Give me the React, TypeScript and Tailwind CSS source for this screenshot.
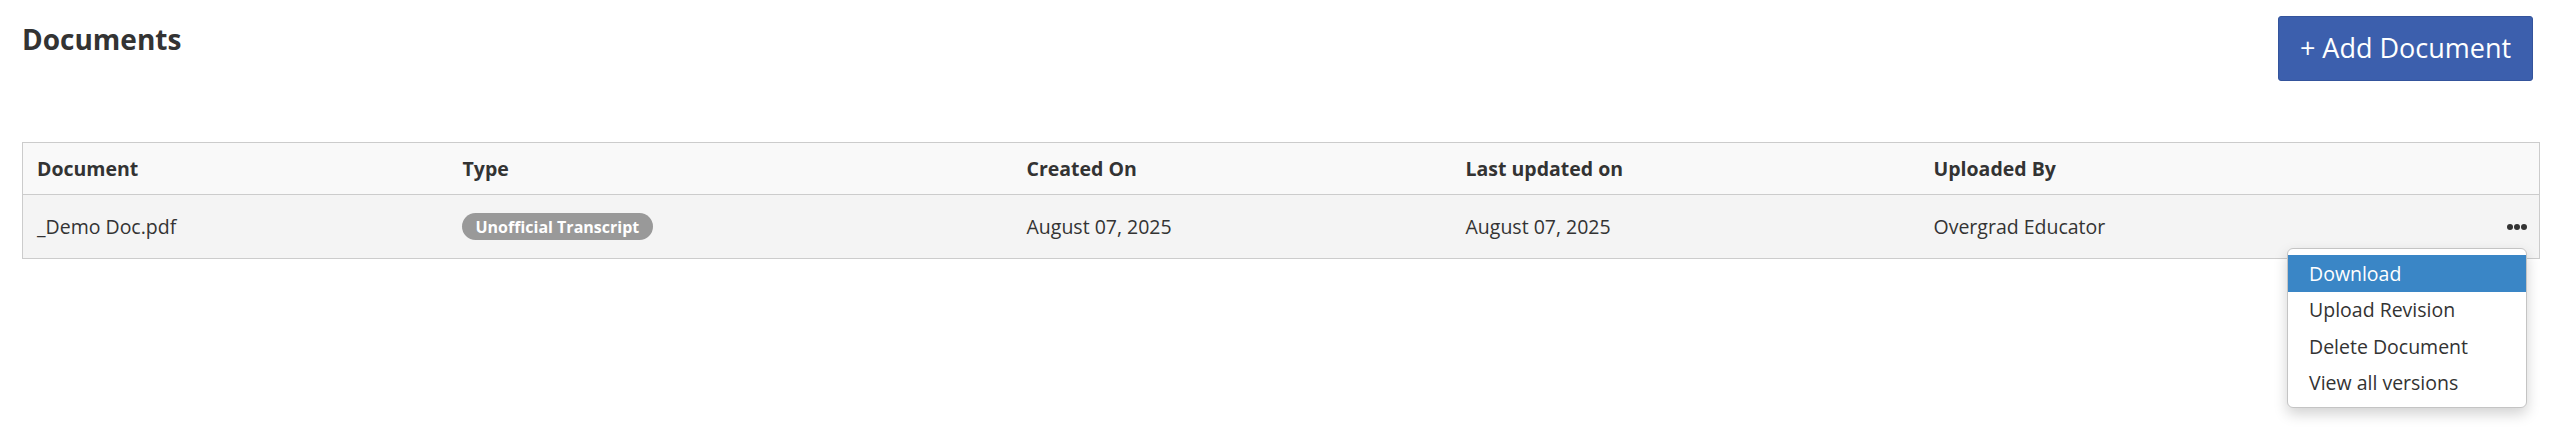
import React from "react"

const rows = [
    {
        name: '_Demo Doc.pdf',
        type: 'Unofficial Transcript',
        createdOn: 'August 07, 2025',
        updatedOn: 'August 07, 2025',
        uploadedBy: 'Overgrad Educator',
    },
]

const menuItems = ['Download', 'Upload Revision', 'Delete Document', 'View all versions']

const ActionsMenu = () => {
    return (
        <div className="absolute right-[12px] top-[53px] z-10 w-[240px] rounded-[6px] border border-[#c4c4c4] bg-white py-[6px] shadow-[0_6px_14px_rgba(0,0,0,0.18)]">
            {menuItems.map((item, i) => (
                <div
                    key={item}
                    className={
                        i === 0
                            ? "flex h-[36.5px] items-center bg-[#3a86c6] px-[21px] text-[19.5px] text-white"
                            : "flex h-[36.5px] items-center px-[21px] text-[19.5px] text-[#333333]"
                    }
                >
                    {item}
                </div>
            ))}
        </div>
    )
}

const App = () => {
    return (
        <div className="min-h-[430px] bg-white pl-[22px] pr-[18px] text-[#333333]" style={{ fontFamily: '"Open Sans", "Liberation Sans", sans-serif' }}>
            <div className="flex items-start justify-between">
                <h1 className="mt-[20px] text-[28px] font-bold leading-[38px] text-[#333333]">Documents</h1>
                <button
                    type="button"
                    className="mr-[7px] mt-[16px] flex h-[65px] w-[255px] items-center justify-center rounded-[3px] border border-[#34549c] bg-[#3c5fad] text-[27px] text-white"
                >
                    + Add Document
                </button>
            </div>

            <table className="mt-[61px] w-full table-fixed border-collapse border border-[#cccccc]">
                <colgroup>
                    <col className="w-[426px]" />
                    <col className="w-[564px]" />
                    <col className="w-[439px]" />
                    <col className="w-[468px]" />
                    <col />
                </colgroup>
                <thead>
                    <tr className="h-[52px] bg-[#f9f9f9]">
                        <th className="px-[14px] text-left text-[19.5px] font-bold">Document</th>
                        <th className="px-[14px] text-left text-[19.5px] font-bold">Type</th>
                        <th className="px-[14px] text-left text-[19.5px] font-bold">Created On</th>
                        <th className="px-[14px] text-left text-[19.5px] font-bold">Last updated on</th>
                        <th className="px-[14px] text-left text-[19.5px] font-bold">Uploaded By</th>
                    </tr>
                </thead>
                <tbody>
                    {rows.map((row) => (
                        <tr key={row.name} className="h-[64px] border-t border-[#cccccc] bg-[#f4f4f4]">
                            <td className="px-[14px] text-[19.5px]">{row.name}</td>
                            <td className="px-[13px]">
                                <span className="inline-flex h-[27px] items-center rounded-full bg-[#999999] px-[14px] text-[16px] font-bold text-white">
                                    {row.type}
                                </span>
                            </td>
                            <td className="px-[14px] text-[19.5px]">{row.createdOn}</td>
                            <td className="px-[14px] text-[19.5px]">{row.updatedOn}</td>
                            <td className="relative px-[14px] text-[19.5px]">
                                <div className="flex items-center justify-between">
                                    <span>{row.uploadedBy}</span>
                                    <div className="mr-[-2px] flex gap-[1px]">
                                        <span className="h-[6px] w-[6px] rounded-full bg-[#333333]" />
                                        <span className="h-[6px] w-[6px] rounded-full bg-[#333333]" />
                                        <span className="h-[6px] w-[6px] rounded-full bg-[#333333]" />
                                    </div>
                                </div>
                                <ActionsMenu />
                            </td>
                        </tr>
                    ))}
                </tbody>
            </table>
        </div>
    )
}

export default App
